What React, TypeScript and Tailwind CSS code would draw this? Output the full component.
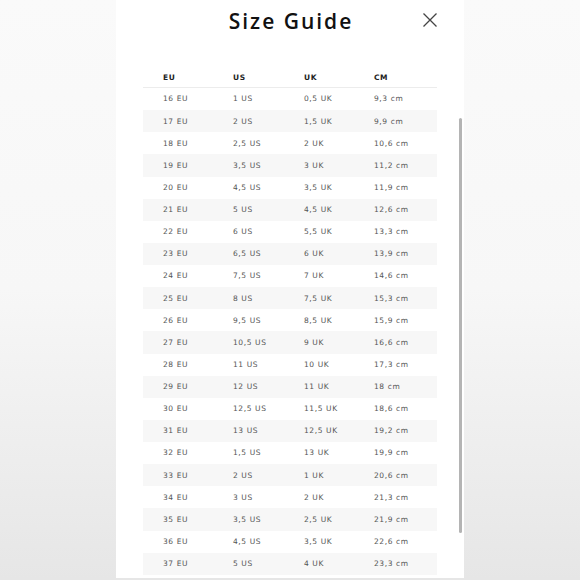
const rows: [string, string, string, string][] = [
  ["16 EU", "1 US", "0,5 UK", "9,3 cm"],
  ["17 EU", "2 US", "1,5 UK", "9,9 cm"],
  ["18 EU", "2,5 US", "2 UK", "10,6 cm"],
  ["19 EU", "3,5 US", "3 UK", "11,2 cm"],
  ["20 EU", "4,5 US", "3,5 UK", "11,9 cm"],
  ["21 EU", "5 US", "4,5 UK", "12,6 cm"],
  ["22 EU", "6 US", "5,5 UK", "13,3 cm"],
  ["23 EU", "6,5 US", "6 UK", "13,9 cm"],
  ["24 EU", "7,5 US", "7 UK", "14,6 cm"],
  ["25 EU", "8 US", "7,5 UK", "15,3 cm"],
  ["26 EU", "9,5 US", "8,5 UK", "15,9 cm"],
  ["27 EU", "10,5 US", "9 UK", "16,6 cm"],
  ["28 EU", "11 US", "10 UK", "17,3 cm"],
  ["29 EU", "12 US", "11 UK", "18 cm"],
  ["30 EU", "12,5 US", "11,5 UK", "18,6 cm"],
  ["31 EU", "13 US", "12,5 UK", "19,2 cm"],
  ["32 EU", "1,5 US", "13 UK", "19,9 cm"],
  ["33 EU", "2 US", "1 UK", "20,6 cm"],
  ["34 EU", "3 US", "2 UK", "21,3 cm"],
  ["35 EU", "3,5 US", "2,5 UK", "21,9 cm"],
  ["36 EU", "4,5 US", "3,5 UK", "22,6 cm"],
  ["37 EU", "5 US", "4 UK", "23,3 cm"],
];

export default function App() {
  return (
    <div className="h-[580px] overflow-hidden bg-gradient-to-b from-[#fafafa] via-[#f7f7f7] to-[#e6e6e6] flex justify-center font-['DejaVu_Sans',sans-serif]">
      <div className="relative w-[348px] h-[578px] bg-white flex flex-col">
        <div className="h-[42px] pt-[1px] flex items-center justify-center">
          <h1 className="text-[21px] tracking-[2px] text-[#111] font-semibold pl-[2px] font-['Open_Sans',sans-serif]">Size Guide</h1>
        </div>
        <button className="absolute left-[307px] top-[13px] w-[14px] h-[14px]">
          <svg viewBox="0 0 14 14" className="w-[14px] h-[14px]" stroke="#444" strokeWidth={1.3} fill="none">
            <path d="M0.5 0.5L13.5 13.5M13.5 0.5L0.5 13.5" />
          </svg>
        </button>

        <div className="mt-[24px] ml-[27px] w-[294px] text-[7.5px] tracking-[0.6px] text-[#555]">
          <div className="grid grid-cols-[70px_71px_70px_1fr] pl-[20px] pt-[3px] h-[22px] items-center border-b border-[#ececec] font-bold text-[#222]">
            <span>EU</span>
            <span>US</span>
            <span>UK</span>
            <span>CM</span>
          </div>
          {rows.map((r, i) => (
            <div
              key={r[0]}
              className={`grid grid-cols-[70px_71px_70px_1fr] pl-[20px] h-[22.14px] items-center ${i % 2 === 1 ? "bg-[#f7f7f7]" : "bg-white"}`}
            >
              <span>{r[0]}</span>
              <span>{r[1]}</span>
              <span>{r[2]}</span>
              <span>{r[3]}</span>
            </div>
          ))}
        </div>

        <div className="absolute left-[343px] top-[118px] w-[3px] h-[415px] rounded-full bg-[#b4b4b4]" />
      </div>
    </div>
  );
}
